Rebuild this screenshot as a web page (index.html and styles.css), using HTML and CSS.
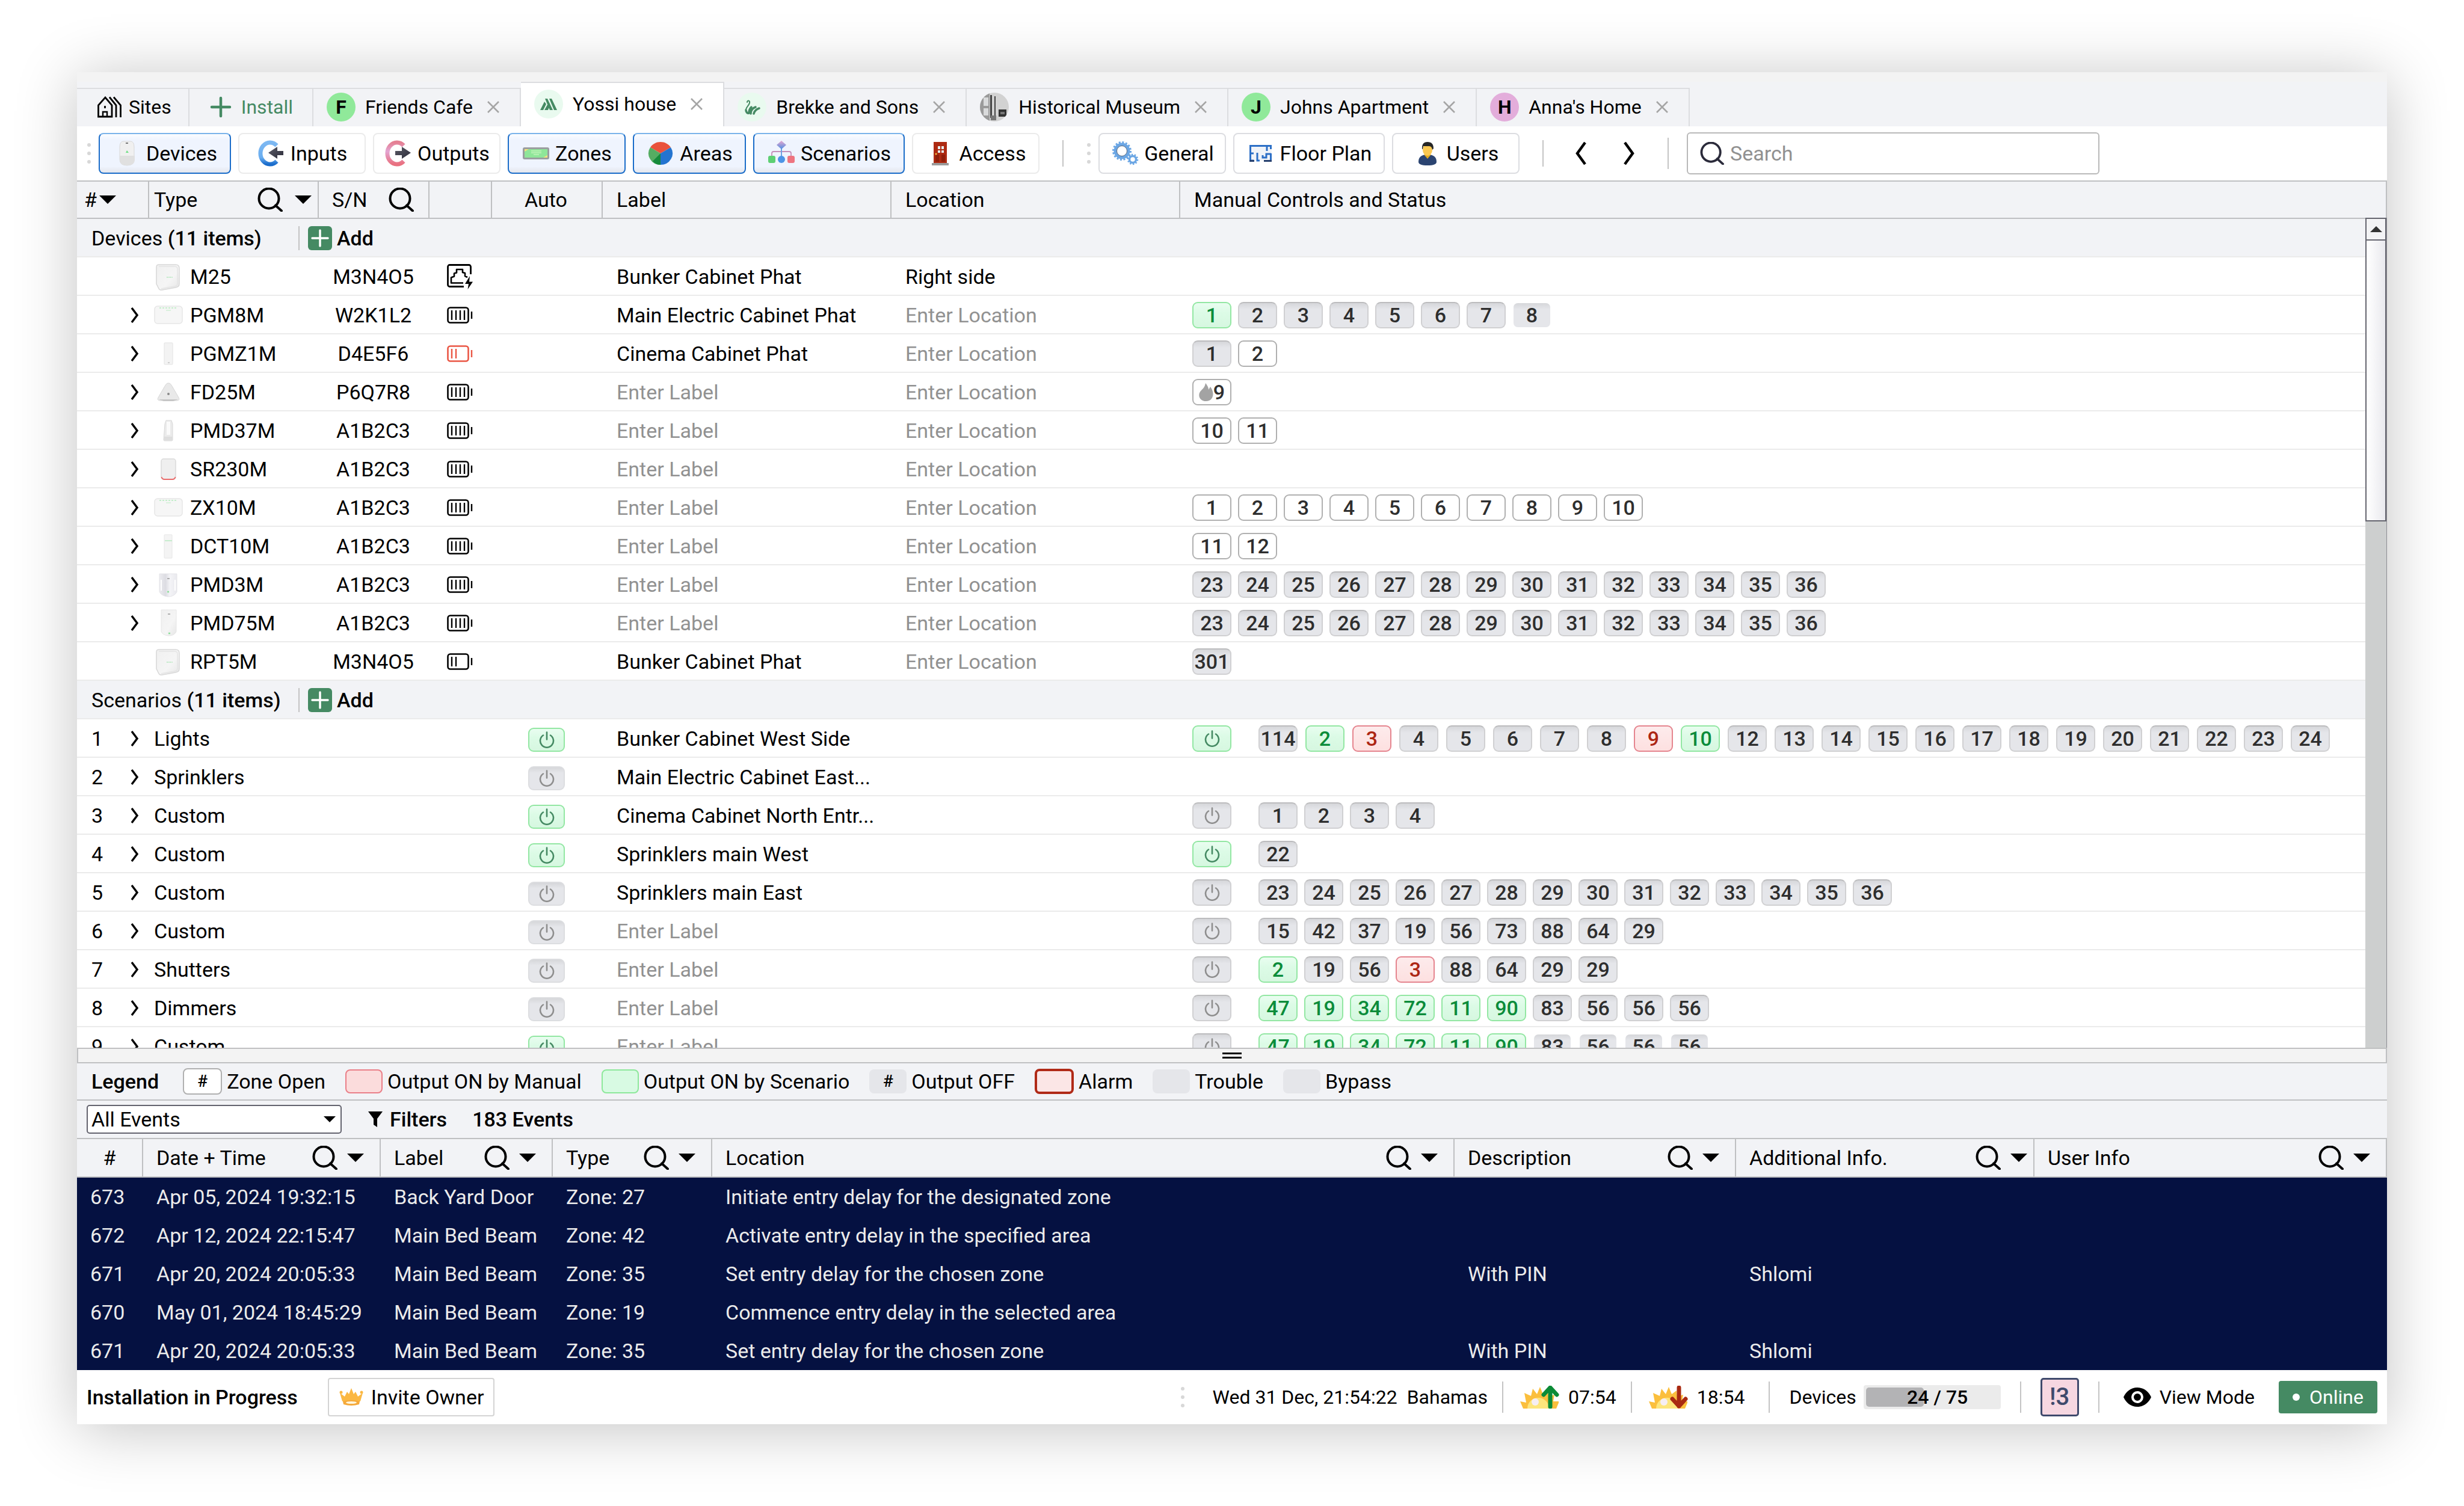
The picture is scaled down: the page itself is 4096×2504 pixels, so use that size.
FILE: index.html
```html
<!DOCTYPE html>
<html lang="en">
<head>
<meta charset="utf-8">
<title>Yossi house</title>
<meta name="viewport" content="width=device-width, initial-scale=1">
<link rel="stylesheet" href="styles.css">
</head>
<body>
<svg class="sprite" aria-hidden="true">
  <defs>
    <linearGradient id="g-dark" x1="0" y1="0" x2="1" y2="1"><stop offset="0" stop-color="#5a5b66"/><stop offset="1" stop-color="#2c2c3a"/></linearGradient>
    <linearGradient id="g-blue" x1="0" y1="0" x2="0" y2="1"><stop offset="0" stop-color="#7db8f2"/><stop offset=".7" stop-color="#6aaef0"/><stop offset="1" stop-color="#1a6ccb"/></linearGradient>
    <linearGradient id="g-pink" x1="0" y1="0" x2="0" y2="1"><stop offset="0" stop-color="#e57f92"/><stop offset=".4" stop-color="#e3a5d3"/><stop offset="1" stop-color="#e9707f"/></linearGradient>
    <linearGradient id="g-shell" x1="0" y1="0" x2="1" y2="1"><stop offset="0" stop-color="#f0f0f0"/><stop offset=".6" stop-color="#f5f5f5"/><stop offset="1" stop-color="#e6e6e6"/></linearGradient>
    <linearGradient id="g-tube" x1="0" y1="0" x2="1" y2="0"><stop offset="0" stop-color="#ececf0"/><stop offset=".35" stop-color="#dcdce2"/><stop offset=".6" stop-color="#f4f4f7"/><stop offset="1" stop-color="#e9e9ee"/></linearGradient>
    <linearGradient id="g-tree" x1="0" y1="0" x2="0" y2="1"><stop offset="0" stop-color="#e7a6cf"/><stop offset="1" stop-color="#4d8fe3"/></linearGradient>
    <clipPath id="round"><circle cx="24" cy="24" r="24"/></clipPath>
  </defs>
  <symbol id="i-search" viewBox="0 0 42 40"><circle cx="19" cy="18" r="16.500" fill="none" stroke="currentColor" stroke-width="4"/><path d="M30 29.500 40 38.500" stroke="currentColor" stroke-width="4" stroke-linecap="round"/></symbol>
  <symbol id="i-down" viewBox="0 0 28 14"><path d="M0 0h28L14 14z" fill="currentColor"/></symbol>
  <symbol id="i-next" viewBox="0 0 14 28"><path d="M2 2 11 14 2 26" fill="none" stroke="currentColor" stroke-width="3.500"/></symbol>
  <symbol id="i-close" viewBox="0 0 20 20"><path d="M1 1 19 19M19 1 1 19" stroke="currentColor" stroke-width="2.500"/></symbol>
  <symbol id="i-add" viewBox="0 0 40 40"><rect width="40" height="40" rx="6" fill="#458a63"/><path d="M20 7v26M7 20h26" stroke="#fff" stroke-width="3.500" stroke-linecap="round"/></symbol>
  <symbol id="i-power" viewBox="0 0 28 28"><path d="M8 6.500a11 11 0 1 0 12 0M14 1.500v12" fill="none" stroke="currentColor" stroke-width="2.600" stroke-linecap="round"/></symbol>
  <symbol id="i-battery" viewBox="0 0 43 28"><rect x="1.500" y="1.500" width="34" height="25" rx="4" fill="none" stroke="currentColor" stroke-width="2.600"/><path d="M8 6v16M15 6v16M22 6v16M29 6v16M41 8v12" stroke="currentColor" stroke-width="2.400"/></symbol>
  <symbol id="i-battery-low" viewBox="0 0 43 28"><rect x="1.500" y="1.500" width="34" height="25" rx="4" fill="none" stroke="currentColor" stroke-width="2.600"/><path d="M8 6v16M15 6v16M41 8v12" stroke="currentColor" stroke-width="2.400"/></symbol>
  <symbol id="i-ethernet" viewBox="0 0 43 42"><path d="M28 37.500H4.500a3 3 0 0 1-3-3v-30a3 3 0 0 1 3-3h32a3 3 0 0 1 3 3V17" fill="none" stroke="#000" stroke-width="2.800"/><path d="M27 31.500H7v-9l5-2v-5l4-1V9h10v5l4 1v5l4 2" fill="none" stroke="#000" stroke-width="2.600" stroke-linejoin="round"/><path d="M38 20 30 33h6l-1.500 9L43 29.500h-6z"/></symbol>
  <symbol id="i-flame" viewBox="0 0 24 30"><path d="M11 0c4 5 5 8 5 11l3-5c8 10 5 24-7 24S-3 18 4 12c3-3 6-6 7-12z" fill="#a3a3a3"/></symbol>
  <symbol id="d-hub" viewBox="0 0 48 48"><path d="M8 4h28c4 0 6 2 6 6v26c0 4-2 5-6 6l-22 4c-4 1-6-1-7-4L4 36V8c0-3 1-4 4-4z" fill="url(#g-shell)" stroke="#d8d8d8" stroke-width="1.500"/><path d="M8 7h26c3 0 5 1 5 4v24c0 3-1 4-4 5l-23 4" fill="none" stroke="#e4e4e4" stroke-width="1.500"/><path d="M21 25h10" stroke="#a9e5b4" stroke-width="1.500" stroke-dasharray="2 1"/></symbol>
  <symbol id="d-wide" viewBox="0 0 48 48"><rect x="1" y="9" width="46" height="29" rx="5" fill="#f6f6f6" stroke="#e6e6e6" stroke-width="1.500"/><path d="M9 12h30" stroke="#b4ecbd" stroke-width="1.500" stroke-dasharray="3 2"/><path d="M20 16h8" stroke="#c6efcd" stroke-width="1.200"/></symbol>
  <symbol id="d-slim" viewBox="0 0 48 48"><rect x="17" y="6" width="14" height="36" rx="1" fill="#f3f3f3" stroke="#e2e2e2"/><path d="M23 39h3" stroke="#aaa"/></symbol>
  <symbol id="d-fire" viewBox="0 0 48 48"><path d="M24 9c3 0 4 2 6 5l11 19c2 4 0 5-4 5H11c-4 0-6-1-4-5l11-19c2-3 3-5 6-5z" fill="#e9e9e9" stroke="#d6d6d6"/><path d="M8 36h32l-8 3H16z" fill="#c6c6c6"/><circle cx="24" cy="27" r="2" fill="#888"/></symbol>
  <symbol id="d-motion" viewBox="0 0 48 48"><path d="M20 7h9l2 6v26c0 2-1 2-3 2h-9c-2 0-3 0-3-2l2-26z" fill="#eaeaea" stroke="#d9d9d9"/><path d="M21 9h6v22h-6z" fill="#fafafa"/><path d="M17 34h14v6H17z" fill="#dedede"/></symbol>
  <symbol id="d-siren" viewBox="0 0 48 48"><rect x="12" y="7" width="24" height="34" rx="4" fill="#efefef" stroke="#dadada" stroke-width="1.500"/><path d="M12.500 37q1 4 5 4h13q4 0 5-4" fill="none" stroke="#ea6a6a" stroke-width="1.800"/></symbol>
  <symbol id="d-slim-g" viewBox="0 0 48 48"><rect x="17" y="5" width="13" height="39" rx="1" fill="#f4f4f4" stroke="#e6e6e6"/><path d="M18 15h12" stroke="#b8ecc2" stroke-width="1.500"/></symbol>
  <symbol id="d-curve" viewBox="0 0 48 48"><path d="M9 6h29v30c-3 6-9 8-14 8s-12-2-15-8z" fill="url(#g-tube)" stroke="#e4e4e8"/><path d="M12 16v18M35 16v18" stroke="#fff" stroke-width="2"/><path d="M22 14h4" stroke="#999" stroke-width="1.500"/><path d="M22 36h3" stroke="#8fe09c" stroke-width="2.500"/></symbol>
  <symbol id="d-tall" viewBox="0 0 48 48"><path d="M12 2h25v36c-2 5-7 7-12 7s-11-2-13-7z" fill="url(#g-shell)" stroke="#e6e6e6"/><path d="M23 9h4" stroke="#999" stroke-width="1.500"/><path d="M24 41h3" stroke="#8fe09c" stroke-width="2.500"/></symbol>
  <symbol id="i-sun" viewBox="0 0 64 38"><path d="M0 26 10 28 7 12 18 17 21 5 28 14 33 2 38 14 46 8 47 18 57 15 55 26 65 26 60 38H5z" fill="#fbbf3d"/><path d="M12 38a18 18 0 0 1 36 0z" fill="#fde57c"/><circle cx="25" cy="27" r="6" fill="#f6eef3"/></symbol>
</svg>

<main class="window">
  <div class="titlebar"></div>
  <nav class="tabs" aria-label="Open sites">
    <div class="tab wide"><svg class="ic40" viewBox="0 0 40 36" fill="none" stroke="#000" stroke-width="2.800"><path d="M1.500 34V15L13 2l11 13v19z"/><path d="M9 34v-8h7v8" stroke-width="2.400"/><path d="M12.500 16v4"/><path d="M20 1.500 31 15v20M27 1.500 38.500 15v20"/></svg><a href="#sites">Sites</a></div>
    <div class="tab wide install"><svg class="ic40" viewBox="0 0 40 36" stroke="#458a63" stroke-width="4.500" stroke-linecap="round"><path d="M20 3v30M5 18h30"/></svg><a href="#install">Install</a></div>
    <div class="tab"><span class="avatar green">F</span><a href="#friends">Friends Cafe</a><button class="close" aria-label="Close Friends Cafe"><svg><use href="#i-close"/></svg></button></div>
    <div class="tab active"><span class="avatar pale"><svg viewBox="0 0 48 48" fill="#458a63"><path d="M10 34 17 20l3 4-5 10zM17 34l5-9 3 4-2 5zM18 15h4l9 19h-5zM25 15h4l9 19h-5z"/></svg></span><a href="#yossi" aria-current="page">Yossi house</a><button class="close" aria-label="Close Yossi house"><svg><use href="#i-close"/></svg></button></div>
    <div class="tab"><span class="avatar pale"><svg viewBox="0 0 48 48" fill="none" stroke="#458a63" stroke-linecap="round"><path d="M16 16c0-4 5-3 4 1-1 5-7 8-6 13" stroke-width="2"/><path d="M14 29c0 4 3 6 5 5 0-4 1-7 4-10M22 35c0-5 2-9 8-11M27 35c1-4 3-7 9-9" stroke-width="3.500"/></svg></span><a href="#brekke">Brekke and Sons</a><button class="close" aria-label="Close Brekke and Sons"><svg><use href="#i-close"/></svg></button></div>
    <div class="tab"><span class="avatar"><svg viewBox="0 0 48 48"><g clip-path="url(#round)"><path d="M0 0h48v48H0z" fill="#d2d2d2"/><path d="M0 0h16v48H0z" fill="#9a9a9a"/><path d="M6 8h8v14H6zM6 26h8v12H6z" fill="#d9dadb"/><path d="M17 4h3v38h-3zM24 6h2v36h-2z" fill="#444"/><path d="M18 38h9v8h-9z" fill="#777"/><path d="M31 28h13v12H31z" fill="#333"/><path d="M34 32h7v4h-7z" fill="#777"/></g></svg></span><a href="#museum">Historical Museum</a><button class="close" aria-label="Close Historical Museum"><svg><use href="#i-close"/></svg></button></div>
    <div class="tab"><span class="avatar green">J</span><a href="#johns">Johns Apartment</a><button class="close" aria-label="Close Johns Apartment"><svg><use href="#i-close"/></svg></button></div>
    <div class="tab"><span class="avatar pink">H</span><a href="#anna">Anna's Home</a><button class="close" aria-label="Close Anna's Home"><svg><use href="#i-close"/></svg></button></div>
  </nav>

  <div class="toolbar">
    <span class="grip"><i></i><i></i><i></i></span>
    <button class="tool on w220"><svg viewBox="0 0 48 44"><path d="M12 12q0-10 6-10h12q6 0 6 10v20q0 10-12 10T12 32z" fill="#f0f0f0" stroke="#d8d8d8"/><path d="M12 26h25v6q0 10-12 10T12 32z" fill="#e0e0e0"/><path d="M22 5h4" stroke="#777" stroke-width="2"/><path d="M22 21l2-4 3 4z" fill="#71e086"/></svg>Devices</button>
    <button class="tool w212"><svg viewBox="0 0 48 44"><path d="M33 9A16 18 0 1 0 33 35" fill="none" stroke="url(#g-blue)" stroke-width="7"/><path d="M19 21 34 11v7h10v7H34v6z" fill="url(#g-dark)"/></svg>Inputs</button>
    <button class="tool w212"><svg viewBox="0 0 48 44"><path d="M33 9A16 18 0 1 0 33 35" fill="none" stroke="url(#g-pink)" stroke-width="7"/><path d="M45 21 30 11v7H19v7h11v6z" fill="url(#g-dark)"/></svg>Outputs</button>
    <button class="tool on w196"><svg viewBox="0 0 48 44"><rect x="2" y="12" width="44" height="20" rx="3" fill="#9a9ea0"/><rect x="5" y="15" width="38" height="14" fill="#8fe699"/><path d="M5 15h7l-7 4zM43 29h-7l7-4z" fill="#f7e27b"/><path d="M16 18h17M16 21h17M20 24h9" stroke="#c3f3bb" stroke-width="1.500"/></svg>Zones</button>
    <button class="tool on w188"><svg viewBox="0 0 48 44"><path d="M24 22 7 12A20 19 0 0 1 41 12z" fill="#e9523c"/><path d="M24 22 41 12A20 19 0 0 1 24 41z" fill="#2374d0"/><path d="M24 22v19A20 19 0 0 1 7 12z" fill="#55ad62"/><path d="M24 22v19q-8 0-13-6z" fill="#168a3c"/></svg>Areas</button>
    <button class="tool on w252"><svg viewBox="0 0 48 44"><path d="M8 28v-6q0-3 3-3h26q3 0 3 3v6M24 12v16" fill="none" stroke="#c58fb9" stroke-width="1.800"/><path d="M24 11v16" stroke="#6da2e4" stroke-width="2"/><path d="M24 1 32 8 24 15 16 8z" fill="url(#g-tree)"/><rect x="2" y="26" width="12" height="12" rx="3" fill="#5dcf73"/><circle cx="24" cy="32" r="6" fill="#4d94e6"/><rect x="34" y="26" width="12" height="12" rx="3" fill="#ee7480"/></svg>Scenarios</button>
    <button class="tool w212"><svg viewBox="0 0 48 44"><path d="M13 3h22v36H13z" fill="#ad2a12"/><path d="M20 10h4v5h-4zM26 10h4v5h-4zM20 17h4v4h-4zM26 17h4v4h-4z" fill="#e5eef0"/><path d="M16 24h6v12h-6zM26 24h6v12h-6z" fill="#8f1f0b"/><path d="M10 38h28v4H10z" fill="#9b9b9b"/><circle cx="17" cy="23" r="1.500" fill="#f7c33e"/></svg>Access</button>
    <span class="rule"></span>
    <span class="grip"><i></i><i></i><i></i></span>
    <button class="tool w212 soft"><svg viewBox="0 0 48 44" fill="none" stroke="#6ba6e4"><circle cx="19" cy="18" r="11" stroke-width="5"/><circle cx="19" cy="18" r="14.500" stroke-width="3" stroke-dasharray="3 2.690"/><circle cx="37" cy="32" r="5.500" stroke-width="3.500"/><circle cx="37" cy="32" r="8" stroke-width="2.500" stroke-dasharray="2.500 2.530"/><circle cx="19" cy="18" r="8.500" stroke="#54667d" stroke-width="1"/></svg>General</button>
    <button class="tool w252 soft"><svg viewBox="0 0 48 44"><path d="M5 8h37v26H5z" fill="#f0f3f8"/><path d="M12 34H6.500V9.500h34V15M40.500 22v12M34 10v8M41 23h-8v6h-6v-4M7 22h5M18 21v13h4" fill="none" stroke="#2c6fc6" stroke-width="3"/><path d="M5 34.500h8M29 34.500h13" stroke="#26406e" stroke-width="3"/></svg>Floor Plan</button>
    <button class="tool w212 soft"><svg viewBox="0 0 48 44"><path d="M9 36q0-12 15-12t15 12q0 6-15 6T9 36z" fill="#2b4471"/><path d="M18 24 24 31 30 24z" fill="#e2a91f"/><ellipse cx="24" cy="16" rx="8" ry="10" fill="#fbc851"/><path d="M15 15q-1-12 9-12t10 11l-2 2q-1-6-5-6t-10 0l-1 5z" fill="#262626"/></svg>Users</button>
    <span class="rule"></span>
    <button class="nav prev" aria-label="Previous"><svg viewBox="0 0 20 40"><path d="M17 2 4 20 17 38" fill="none" stroke="#000" stroke-width="4.500"/></svg></button>
    <button class="nav" aria-label="Next"><svg viewBox="0 0 20 40"><path d="M3 2 16 20 3 38" fill="none" stroke="#000" stroke-width="4.500"/></svg></button>
    <span class="rule tall"></span>
    <label class="search"><svg class="mag"><use href="#i-search"/></svg><input type="search" placeholder="Search" aria-label="Search"></label>
  </div>

  <section class="grid-area">
    <table class="grid">
      <colgroup><col class="c1"><col class="c2"><col class="c3"><col class="c4"><col class="c5"><col class="c6"><col class="c7"><col></colgroup>
      <thead><tr>
        <th><div class="head tight"><span>#</span><svg class="down"><use href="#i-down"/></svg></div></th>
        <th><div class="head near"><span>Type</span><svg class="mag push"><use href="#i-search"/></svg><svg class="down"><use href="#i-down"/></svg></div></th>
        <th><div class="head sn"><span>S/N</span><svg class="mag push"><use href="#i-search"/></svg></div></th>
        <th></th><th class="mid">Auto</th><th class="txt">Label</th><th class="txt">Location</th><th class="txt">Manual Controls and Status</th>
      </tr></thead>
      <tbody>
        <tr class="section"><th colspan="8"><div class="sec"><span class="sec-name">Devices <b>(11 items)</b></span><button class="add"><svg><use href="#i-add"/></svg>Add</button></div></th></tr>
        <tr><td></td><td><div class="type"><svg><use href="#d-hub"/></svg>M25</div></td><td class="mid">M3N4O5</td><td class="mid"><svg class="eth"><use href="#i-ethernet"/></svg></td><td></td><td><input aria-label="Label" value="Bunker Cabinet Phat"></td><td><input aria-label="Location" value="Right side"></td><td></td></tr>
        <tr><td><button class="exp" aria-label="Expand"><svg><use href="#i-next"/></svg></button></td><td><div class="type"><svg><use href="#d-wide"/></svg>PGM8M</div></td><td class="mid">W2K1L2</td><td class="mid"><svg class="bat"><use href="#i-battery"/></svg></td><td></td><td><input aria-label="Label" value="Main Electric Cabinet Phat"></td><td><input aria-label="Location" placeholder="Enter Location"></td><td><div class="chips"><button class="on">1</button><button>2</button><button>3</button><button>4</button><button>5</button><button>6</button><button>7</button><button class="flat">8</button></div></td></tr>
        <tr><td><button class="exp" aria-label="Expand"><svg><use href="#i-next"/></svg></button></td><td><div class="type"><svg><use href="#d-slim"/></svg>PGMZ1M</div></td><td class="mid">D4E5F6</td><td class="mid"><svg class="bat low"><use href="#i-battery-low"/></svg></td><td></td><td><input aria-label="Label" value="Cinema Cabinet Phat"></td><td><input aria-label="Location" placeholder="Enter Location"></td><td><div class="chips"><button>1</button><button class="open">2</button></div></td></tr>
        <tr><td><button class="exp" aria-label="Expand"><svg><use href="#i-next"/></svg></button></td><td><div class="type"><svg><use href="#d-fire"/></svg>FD25M</div></td><td class="mid">P6Q7R8</td><td class="mid"><svg class="bat"><use href="#i-battery"/></svg></td><td></td><td><input aria-label="Label" placeholder="Enter Label"></td><td><input aria-label="Location" placeholder="Enter Location"></td><td><div class="chips"><button class="open"><svg class="flame"><use href="#i-flame"/></svg>9</button></div></td></tr>
        <tr><td><button class="exp" aria-label="Expand"><svg><use href="#i-next"/></svg></button></td><td><div class="type"><svg><use href="#d-motion"/></svg>PMD37M</div></td><td class="mid">A1B2C3</td><td class="mid"><svg class="bat"><use href="#i-battery"/></svg></td><td></td><td><input aria-label="Label" placeholder="Enter Label"></td><td><input aria-label="Location" placeholder="Enter Location"></td><td><div class="chips"><button class="open">10</button><button class="open">11</button></div></td></tr>
        <tr><td><button class="exp" aria-label="Expand"><svg><use href="#i-next"/></svg></button></td><td><div class="type"><svg><use href="#d-siren"/></svg>SR230M</div></td><td class="mid">A1B2C3</td><td class="mid"><svg class="bat"><use href="#i-battery"/></svg></td><td></td><td><input aria-label="Label" placeholder="Enter Label"></td><td><input aria-label="Location" placeholder="Enter Location"></td><td></td></tr>
        <tr><td><button class="exp" aria-label="Expand"><svg><use href="#i-next"/></svg></button></td><td><div class="type"><svg><use href="#d-wide"/></svg>ZX10M</div></td><td class="mid">A1B2C3</td><td class="mid"><svg class="bat"><use href="#i-battery"/></svg></td><td></td><td><input aria-label="Label" placeholder="Enter Label"></td><td><input aria-label="Location" placeholder="Enter Location"></td><td><div class="chips"><button class="open">1</button><button class="open">2</button><button class="open">3</button><button class="open">4</button><button class="open">5</button><button class="open">6</button><button class="open">7</button><button class="open">8</button><button class="open">9</button><button class="open">10</button></div></td></tr>
        <tr><td><button class="exp" aria-label="Expand"><svg><use href="#i-next"/></svg></button></td><td><div class="type"><svg><use href="#d-slim-g"/></svg>DCT10M</div></td><td class="mid">A1B2C3</td><td class="mid"><svg class="bat"><use href="#i-battery"/></svg></td><td></td><td><input aria-label="Label" placeholder="Enter Label"></td><td><input aria-label="Location" placeholder="Enter Location"></td><td><div class="chips"><button class="open">11</button><button class="open">12</button></div></td></tr>
        <tr><td><button class="exp" aria-label="Expand"><svg><use href="#i-next"/></svg></button></td><td><div class="type"><svg><use href="#d-curve"/></svg>PMD3M</div></td><td class="mid">A1B2C3</td><td class="mid"><svg class="bat"><use href="#i-battery"/></svg></td><td></td><td><input aria-label="Label" placeholder="Enter Label"></td><td><input aria-label="Location" placeholder="Enter Location"></td><td><div class="chips"><button>23</button><button>24</button><button>25</button><button>26</button><button>27</button><button>28</button><button>29</button><button>30</button><button>31</button><button>32</button><button>33</button><button>34</button><button>35</button><button>36</button></div></td></tr>
        <tr><td><button class="exp" aria-label="Expand"><svg><use href="#i-next"/></svg></button></td><td><div class="type"><svg><use href="#d-tall"/></svg>PMD75M</div></td><td class="mid">A1B2C3</td><td class="mid"><svg class="bat"><use href="#i-battery"/></svg></td><td></td><td><input aria-label="Label" placeholder="Enter Label"></td><td><input aria-label="Location" placeholder="Enter Location"></td><td><div class="chips"><button>23</button><button>24</button><button>25</button><button>26</button><button>27</button><button>28</button><button>29</button><button>30</button><button>31</button><button>32</button><button>33</button><button>34</button><button>35</button><button>36</button></div></td></tr>
        <tr><td></td><td><div class="type"><svg><use href="#d-hub"/></svg>RPT5M</div></td><td class="mid">M3N4O5</td><td class="mid"><svg class="bat"><use href="#i-battery-low"/></svg></td><td></td><td><input aria-label="Label" value="Bunker Cabinet Phat"></td><td><input aria-label="Location" placeholder="Enter Location"></td><td><div class="chips"><button>301</button></div></td></tr>
      </tbody>
      <tbody>
        <tr class="section"><th colspan="8"><div class="sec"><span class="sec-name">Scenarios <b>(11 items)</b></span><button class="add"><svg><use href="#i-add"/></svg>Add</button></div></th></tr>
        <tr><td><div class="num">1<button class="exp" aria-label="Expand"><svg><use href="#i-next"/></svg></button></div></td><td class="name" colspan="3">Lights</td><td class="mid"><button class="pw on" aria-label="Auto"><svg><use href="#i-power"/></svg></button></td><td><input aria-label="Label" value="Bunker Cabinet West Side"></td><td></td><td><div class="chips loose"><button class="run on" aria-label="Run"><svg><use href="#i-power"/></svg></button><button>114</button><button class="on">2</button><button class="man">3</button><button>4</button><button>5</button><button>6</button><button>7</button><button>8</button><button class="man">9</button><button class="on">10</button><button>12</button><button>13</button><button>14</button><button>15</button><button>16</button><button>17</button><button>18</button><button>19</button><button>20</button><button>21</button><button>22</button><button>23</button><button>24</button></div></td></tr>
        <tr><td><div class="num">2<button class="exp" aria-label="Expand"><svg><use href="#i-next"/></svg></button></div></td><td class="name" colspan="3">Sprinklers</td><td class="mid"><button class="pw" aria-label="Auto"><svg><use href="#i-power"/></svg></button></td><td><input aria-label="Label" value="Main Electric Cabinet East..."></td><td></td><td></td></tr>
        <tr><td><div class="num">3<button class="exp" aria-label="Expand"><svg><use href="#i-next"/></svg></button></div></td><td class="name" colspan="3">Custom</td><td class="mid"><button class="pw on" aria-label="Auto"><svg><use href="#i-power"/></svg></button></td><td><input aria-label="Label" value="Cinema Cabinet North Entr..."></td><td></td><td><div class="chips"><button class="run" aria-label="Run"><svg><use href="#i-power"/></svg></button><button>1</button><button>2</button><button>3</button><button>4</button></div></td></tr>
        <tr><td><div class="num">4<button class="exp" aria-label="Expand"><svg><use href="#i-next"/></svg></button></div></td><td class="name" colspan="3">Custom</td><td class="mid"><button class="pw on" aria-label="Auto"><svg><use href="#i-power"/></svg></button></td><td><input aria-label="Label" value="Sprinklers main West"></td><td></td><td><div class="chips"><button class="run on" aria-label="Run"><svg><use href="#i-power"/></svg></button><button>22</button></div></td></tr>
        <tr><td><div class="num">5<button class="exp" aria-label="Expand"><svg><use href="#i-next"/></svg></button></div></td><td class="name" colspan="3">Custom</td><td class="mid"><button class="pw" aria-label="Auto"><svg><use href="#i-power"/></svg></button></td><td><input aria-label="Label" value="Sprinklers main East"></td><td></td><td><div class="chips"><button class="run" aria-label="Run"><svg><use href="#i-power"/></svg></button><button>23</button><button>24</button><button>25</button><button>26</button><button>27</button><button>28</button><button>29</button><button>30</button><button>31</button><button>32</button><button>33</button><button>34</button><button>35</button><button>36</button></div></td></tr>
        <tr><td><div class="num">6<button class="exp" aria-label="Expand"><svg><use href="#i-next"/></svg></button></div></td><td class="name" colspan="3">Custom</td><td class="mid"><button class="pw" aria-label="Auto"><svg><use href="#i-power"/></svg></button></td><td><input aria-label="Label" placeholder="Enter Label"></td><td></td><td><div class="chips"><button class="run" aria-label="Run"><svg><use href="#i-power"/></svg></button><button>15</button><button>42</button><button>37</button><button>19</button><button>56</button><button>73</button><button>88</button><button>64</button><button>29</button></div></td></tr>
        <tr><td><div class="num">7<button class="exp" aria-label="Expand"><svg><use href="#i-next"/></svg></button></div></td><td class="name" colspan="3">Shutters</td><td class="mid"><button class="pw" aria-label="Auto"><svg><use href="#i-power"/></svg></button></td><td><input aria-label="Label" placeholder="Enter Label"></td><td></td><td><div class="chips"><button class="run" aria-label="Run"><svg><use href="#i-power"/></svg></button><button class="on">2</button><button>19</button><button>56</button><button class="man">3</button><button>88</button><button>64</button><button>29</button><button>29</button></div></td></tr>
        <tr><td><div class="num">8<button class="exp" aria-label="Expand"><svg><use href="#i-next"/></svg></button></div></td><td class="name" colspan="3">Dimmers</td><td class="mid"><button class="pw" aria-label="Auto"><svg><use href="#i-power"/></svg></button></td><td><input aria-label="Label" placeholder="Enter Label"></td><td></td><td><div class="chips"><button class="run" aria-label="Run"><svg><use href="#i-power"/></svg></button><button class="on">47</button><button class="on">19</button><button class="on">34</button><button class="on">72</button><button class="on">11</button><button class="on">90</button><button>83</button><button>56</button><button>56</button><button>56</button></div></td></tr>
        <tr><td><div class="num">9<button class="exp" aria-label="Expand"><svg><use href="#i-next"/></svg></button></div></td><td class="name" colspan="3">Custom</td><td class="mid"><button class="pw on" aria-label="Auto"><svg><use href="#i-power"/></svg></button></td><td><input aria-label="Label" placeholder="Enter Label"></td><td></td><td><div class="chips"><button class="run" aria-label="Run"><svg><use href="#i-power"/></svg></button><button class="on">47</button><button class="on">19</button><button class="on">34</button><button class="on">72</button><button class="on">11</button><button class="on">90</button><button class="flat">83</button><button class="flat">56</button><button class="flat">56</button><button class="flat">56</button></div></td></tr>
      </tbody>
    </table>
    <div class="scrollbar"><button aria-label="Scroll up"><svg viewBox="0 0 20 10"><path d="M10 0 20 10H0z" fill="#333"/></svg></button><div class="thumb"></div></div>
  </section>

  <div class="splitter"><span></span></div>

  <div class="legend">
    <strong>Legend</strong>
    <span class="key"><i class="sw open">#</i>Zone Open</span>
    <span class="key"><i class="sw red"></i>Output ON by Manual</span>
    <span class="key"><i class="sw grn"></i>Output ON by Scenario</span>
    <span class="key"><i class="sw">#</i>Output OFF</span>
    <span class="key"><i class="sw alarm"></i>Alarm</span>
    <span class="key"><i class="sw"></i>Trouble</span>
    <span class="key"><i class="sw"></i>Bypass</span>
  </div>

  <div class="filters">
    <label class="pick"><select aria-label="Events shown"><option>All Events</option></select><svg viewBox="0 0 28 14"><path d="M0 0h28L14 14z"/></svg></label>
    <button class="filter"><svg viewBox="0 0 24 26"><path d="M0 0h24L15 12v14l-6-4V12z"/></svg>Filters</button>
    <strong>183 Events</strong>
  </div>

  <table class="events">
    <colgroup><col class="e1"><col class="e2"><col class="e3"><col class="e4"><col><col class="e6"><col class="e7"><col class="e8"></colgroup>
    <thead><tr>
      <th class="hash">#</th>
      <th><div class="head"><span>Date + Time</span><svg class="mag push"><use href="#i-search"/></svg><svg class="down"><use href="#i-down"/></svg></div></th>
      <th><div class="head"><span>Label</span><svg class="mag push"><use href="#i-search"/></svg><svg class="down"><use href="#i-down"/></svg></div></th>
      <th><div class="head"><span>Type</span><svg class="mag push"><use href="#i-search"/></svg><svg class="down"><use href="#i-down"/></svg></div></th>
      <th><div class="head"><span>Location</span><svg class="mag push"><use href="#i-search"/></svg><svg class="down"><use href="#i-down"/></svg></div></th>
      <th><div class="head"><span>Description</span><svg class="mag push"><use href="#i-search"/></svg><svg class="down"><use href="#i-down"/></svg></div></th>
      <th><div class="head short"><span>Additional Info.</span><svg class="mag push"><use href="#i-search"/></svg><svg class="down"><use href="#i-down"/></svg></div></th>
      <th><div class="head"><span>User Info</span><svg class="mag push"><use href="#i-search"/></svg><svg class="down"><use href="#i-down"/></svg></div></th>
    </tr></thead>
    <tbody>
      <tr><td>673</td><td>Apr 05, 2024 19:32:15</td><td>Back Yard Door</td><td>Zone: 27</td><td>Initiate entry delay for the designated zone</td><td></td><td></td><td></td></tr>
      <tr><td>672</td><td>Apr 12, 2024 22:15:47</td><td>Main Bed Beam</td><td>Zone: 42</td><td>Activate entry delay in the specified area</td><td></td><td></td><td></td></tr>
      <tr><td>671</td><td>Apr 20, 2024 20:05:33</td><td>Main Bed Beam</td><td>Zone: 35</td><td>Set entry delay for the chosen zone</td><td>With PIN</td><td>Shlomi</td><td></td></tr>
      <tr><td>670</td><td>May 01, 2024 18:45:29</td><td>Main Bed Beam</td><td>Zone: 19</td><td>Commence entry delay in the selected area</td><td></td><td></td><td></td></tr>
      <tr><td>671</td><td>Apr 20, 2024 20:05:33</td><td>Main Bed Beam</td><td>Zone: 35</td><td>Set entry delay for the chosen zone</td><td>With PIN</td><td>Shlomi</td><td></td></tr>
    </tbody>
  </table>

  <footer class="status">
    <strong class="stage">Installation in Progress</strong>
    <button class="invite"><svg viewBox="0 0 40 30"><path d="M5 22 1 8l8 6 4-8 3 4 4-10 4 10 3-4 4 8 8-6-4 14z" fill="#fbb843"/><circle cx="3" cy="7" r="2.500" fill="#fbb843"/><circle cx="37" cy="7" r="2.500" fill="#fbb843"/><path d="M6 22q14-4 28 0l-1 5q-13 4-26 0z" fill="#f5a93a"/><ellipse cx="20" cy="24" rx="9" ry="2" fill="#fff6dc"/></svg>Invite Owner</button>
    <span class="grip end"><i></i><i></i><i></i></span>
    <span class="clock"><span>Wed 31 Dec, 21:54:22</span><span>Bahamas</span></span>
    <span class="rule"></span>
    <span class="sun"><svg viewBox="0 0 66 38"><use href="#i-sun" width="64" height="38"/><path d="M50 35V4M39 15 50 3l11 12" fill="none" stroke="#0c8b37" stroke-width="7" stroke-linecap="round" stroke-linejoin="round"/></svg>07:54</span>
    <span class="rule"></span>
    <span class="sun"><svg viewBox="0 0 66 38"><use href="#i-sun" width="64" height="38"/><path d="M50 3v31M39 22l11 12 11-12" fill="none" stroke="#a92a12" stroke-width="7" stroke-linecap="round" stroke-linejoin="round"/></svg>18:54</span>
    <span class="rule late"></span>
    <span class="usage">Devices<span class="meter"><span class="fill"></span><b>24 / 75</b></span></span>
    <span class="rule"></span>
    <button class="alert">!3</button>
    <span class="rule"></span>
    <button class="view"><svg viewBox="0 0 46 32"><path d="M23 0C12 0 4 7 0 16c4 9 12 16 23 16s19-7 23-16C42 7 34 0 23 0zm0 26a10 10 0 1 1 0-20 10 10 0 0 1 0 20zm0-16a6 6 0 1 0 0 12 6 6 0 0 0 0-12z"/></svg>View Mode</button>
    <button class="online"><i></i>Online</button>
  </footer>
</main>
</body>
</html>
```
FILE: styles.css
```css
* { box-sizing: border-box; }

body {
  margin: 0;
  height: 100vh;
  padding: 120px 128px 136px;
  display: flex;
  background: #fff;
  font: 400 34px/40px Roboto, "Liberation Sans", sans-serif;
  color: #000;
}

.sprite { position: absolute; width: 0; height: 0; }

button, input, select { font: inherit; color: inherit; margin: 0; }
button { display: inline-flex; align-items: center; justify-content: center; padding: 0; border: 0; background: none; }
a { color: inherit; text-decoration: none; }
b, strong { font-weight: 500; }
svg { display: block; flex: none; }

.window {
  flex: 1;
  min-width: 0;
  display: flex;
  flex-direction: column;
  background: #fff;
  box-shadow: 0 8px 96px rgba(0, 0, 0, .24);
}

/* site tabs */
.titlebar { height: 16px; background: #f3f3f3; }
.tabs { display: flex; align-items: flex-end; height: 74px; background: #f2f3f6; font-size: 32px; }
.tab {
  display: flex;
  align-items: center;
  height: 64px;
  padding: 0 34px 2px 22px;
  border-top: 2px solid #dcdde0;
  border-right: 2px solid #dcdde0;
  gap: 16px;
  white-space: nowrap;
}
.tab.wide { padding: 0 28px 2px 34px; gap: 12px; }
.tab.install { padding: 0 32px 2px; gap: 14px; color: #458a63; }
.tab.active { height: 74px; background: #fff; }
.ic40 { width: 40px; height: 36px; }
.avatar {
  display: grid;
  place-items: center;
  width: 48px;
  height: 48px;
  border-radius: 50%;
  font-weight: 700;
}
.avatar svg { width: 48px; height: 48px; }
.avatar.green { background: #90e99a; }
.avatar.pink { background: #e3addb; }
.avatar.pale { background: #e9faef; }
.close { margin-left: 8px; color: #a5a5a5; }
.close svg { width: 20px; height: 20px; }

/* toolbar */
.toolbar { display: flex; align-items: center; gap: 12px; height: 90px; padding: 0 16px; }
.grip { display: flex; flex-direction: column; align-items: center; gap: 8px; width: 8px; }
.grip i { width: 6px; height: 6px; border-radius: 50%; background: #d8d8d8; }
.tool {
  gap: 8px;
  height: 68px;
  border: 2px solid #ebebeb;
  border-radius: 8px;
  background: #fff;
  white-space: nowrap;
}
.tool.soft { border-color: #dcdde1; }
.tool.on {
  border-color: #1b6dc9;
  border-top-color: #7ab3ea;
  background: linear-gradient(#fafcff, #eff4fe 16%, #eff4fe 84%, #e4e6ec);
}
.tool svg { width: 48px; height: 44px; }
.w188 { width: 188px; }
.w196 { width: 196px; }
.w212 { width: 212px; }
.w220 { width: 220px; }
.w252 { width: 252px; }
.rule { width: 2px; height: 44px; background: #c4c4c4; margin: 0 26px; }
.rule.tall { height: 52px; margin: 0 18px; }
.nav { width: 40px; height: 48px; margin-right: 14px; }
.nav.prev { margin-right: 28px; margin-left: 4px; }
.nav svg { width: 20px; height: 40px; }
.search {
  display: flex;
  align-items: center;
  width: 686px;
  height: 70px;
  padding: 0 20px;
  gap: 10px;
  border: 2px solid #b9b9b9;
  border-radius: 6px;
}
.search input { flex: 1; min-width: 0; border: 0; padding: 0; background: none; outline: 0; }
.search .mag { color: #2b2b3b; width: 40px; height: 38px; }
::placeholder { color: #919191; opacity: 1; }

/* devices and scenarios */
.grid-area { position: relative; flex: 1; min-height: 0; overflow: hidden; }
table { width: 100%; table-layout: fixed; border-collapse: separate; border-spacing: 0; }
th, td { height: 64px; padding: 0; font-weight: 400; text-align: left; white-space: nowrap; }
thead th {
  border: 0 solid #bfc0c2;
  border-width: 2px 2px 2px 0;
  background: #f2f3f6;
}
.grid td, .grid .section th { padding-top: 2px; border-bottom: 2px solid #ebebeb; }
.c1 { width: 120px; }
.c2 { width: 282px; }
.c3, .c5 { width: 184px; }
.c4 { width: 104px; }
.c6, .c7 { width: 480px; }
.txt { padding-left: 23px; }
.grid .mid { padding-right: 3px; text-align: center; }
.mid svg { margin: 0 auto; }
.head { display: flex; align-items: center; padding: 0 26px 0 22px; gap: 16px; }
.head.tight { padding: 0 0 0 12px; gap: 4px; }
.head.near { padding: 0 10px 0 8px; gap: 20px; }
.head.sn { padding: 0 24px 0 22px; }
.head.short { padding-right: 10px; }
.push { margin-left: auto; }
.mag { width: 42px; height: 40px; }
.down { width: 28px; height: 14px; }
.section th { background: #f2f3f6; }
.sec { display: flex; align-items: center; padding-left: 24px; }
.sec-name { width: 344px; }
.sec b, .add { font-weight: 500; }
.add { gap: 8px; padding-left: 14px; border-left: 2px solid #c4c4c4; }
.add svg { width: 40px; height: 40px; }
.type { display: flex; align-items: center; gap: 12px; padding-left: 8px; }
.type svg { width: 48px; height: 48px; }
.grid .name { padding-left: 8px; }
.num { display: flex; align-items: center; padding-left: 24px; }
.exp { display: flex; width: 14px; margin-left: 89px; }
.num .exp { margin-left: auto; margin-right: 17px; }
.exp svg { width: 14px; height: 28px; }
.bat { width: 43px; height: 28px; }
.bat.low { color: #ea5644; }
.eth { width: 43px; height: 42px; }
.grid input {
  display: block;
  width: 100%;
  padding: 0 0 0 23px;
  border: 0;
  background: none;
  outline: 0;
}

.chips { display: flex; gap: 11px; padding-left: 20px; }
.chips.loose { gap: 13px; }
.chips button, .pw {
  width: 65px;
  height: 44px;
  flex: none;
  border: 2px solid #d0d0d2;
  border-top-color: #bcbcbe;
  border-radius: 9px;
  background: linear-gradient(#d6d7da, #e5e6ea 25%);
  color: #2e2e2e;
  font-weight: 500;
}
.chips .open { border: 2px solid #b0b0b0; background: #fff; }
.chips .on, .pw.on {
  border-color: #93e7a3;
  background: linear-gradient(#e9fdf0, #dcfbe6 40%, #d6f7e0);
  color: #0b8c3a;
}
.chips .man { border-color: #e5858f; background: linear-gradient(#fdebec, #fde0e0); color: #ad2613; }
.chips .flat { border-color: transparent; background-clip: padding-box; }
.chips .run { margin-right: 34px; color: #8e8e8e; }
.chips.loose .run { margin-right: 32px; }
.chips .run svg, .pw svg { width: 28px; height: 28px; }
.chips .run.on, .pw.on { color: #458a63; }
.pw { width: 61px; height: 40px; border-color: #dcdde0; color: #8e8e8e; vertical-align: middle; }
.flame { width: 24px; height: 30px; }

.scrollbar {
  position: absolute;
  top: 62px;
  right: 0;
  bottom: 0;
  width: 36px;
  background: #cdcfcf;
  border-right: 1px solid #8d8d94;
}
.scrollbar button { display: flex; width: 100%; height: 38px; border: 2px solid #65656f; background: #f3f3f5; }
.scrollbar button svg { width: 20px; height: 10px; }
.thumb { height: 467px; border: 2px solid #65656f; border-top: 0; background: linear-gradient(90deg, #fff, #e9e9ee); }

.splitter {
  display: grid;
  place-items: center;
  height: 26px;
  border: 2px solid #bfc0c2;
  background: #f3f3f3;
}
.splitter span { width: 32px; height: 10px; border: 3px solid #000; border-width: 3px 0; }

/* legend and filters */
.legend, .filters { display: flex; align-items: center; background: #f2f3f6; }
.legend { height: 62px; gap: 33px; padding-left: 24px; border-bottom: 2px solid #bfc0c2; }
.legend strong { margin-right: 7px; }
.key { display: flex; align-items: center; gap: 8px; }
.sw {
  display: grid;
  place-items: center;
  width: 62px;
  height: 40px;
  border-radius: 8px;
  background: #e5e6ea;
  font-style: normal;
  font-weight: 500;
  font-size: 28px;
}
.sw.open { width: 65px; height: 44px; border: 2px solid #b0b0b0; background: #fff; }
.sw.red { border: 2px solid #ea7f88; background: #fbdcdc; }
.sw.grn { border: 2px solid #8de89b; background: #d8fae3; }
.sw.alarm { width: 65px; height: 42px; border: 4px solid #b02a17; background: #fbe6e6; }
.filters { height: 62px; padding-left: 16px; }
.pick { position: relative; width: 424px; }
.pick select {
  display: block;
  width: 100%;
  height: 48px;
  padding: 0 6px;
  border: 2px solid #63636e;
  border-radius: 5px;
  background: #fff;
  appearance: none;
}
.pick svg { position: absolute; right: 10px; top: 19px; width: 20px; height: 10px; }
.filter { gap: 12px; margin: 0 42px 0 44px; font-weight: 500; }
.filter svg { width: 24px; height: 26px; }

/* event log */
.events tbody { background: #051141; color: #ebebeb; }
.events thead th { height: 66px; }
.events td { padding-left: 22px; }
.events .hash { text-align: center; }
.e1 { width: 110px; }
.e2 { width: 395px; }
.e3 { width: 286px; }
.e4 { width: 265px; }
.e6 { width: 468px; }
.e7 { width: 496px; }
.e8 { width: 586px; }

/* status bar */
.status { display: flex; align-items: center; height: 90px; padding: 0 16px; font-size: 32px; white-space: nowrap; }
.stage, .invite { font-size: 34px; }
.invite {
  gap: 12px;
  height: 64px;
  margin-left: 50px;
  padding: 0 16px;
  border: 2px solid #d4d4d4;
  border-radius: 4px;
}
.invite svg { width: 42px; height: 30px; }
.grip.end { margin-left: auto; margin-right: 46px; }
.status .rule { height: 52px; margin: 0 28px 0 24px; }
.clock { display: flex; gap: 16px; }
.sun { display: flex; align-items: center; gap: 14px; }
.sun svg { width: 66px; height: 38px; }
.status .rule.late { margin-left: 40px; margin-right: 32px; }
.usage { display: flex; align-items: center; gap: 12px; }
.meter {
  position: relative;
  display: grid;
  place-items: center;
  width: 228px;
  height: 40px;
  padding: 0 4px;
  border-radius: 4px;
  background: #ebebeb;
}
.meter .fill { position: absolute; left: 4px; top: 4px; bottom: 4px; width: 96px; border-radius: 5px; background: #b3b3b5; }
.meter b { position: relative; padding-left: 18px; }
.status .usage + .rule { margin: 0 32px; }
.alert {
  width: 64px;
  height: 64px;
  border: 3px solid #3f4a6c;
  border-radius: 5px;
  background: #f6d7e1;
  color: #3f4a6c;
  font-size: 40px;
  font-weight: 500;
}
.status .alert + .rule { margin: 0 40px 0 32px; }
.view { gap: 14px; margin-right: 40px; }
.view svg { width: 46px; height: 32px; }
.online {
  gap: 16px;
  width: 164px;
  height: 54px;
  border-radius: 4px;
  background: #458a63;
  color: #fff;
}
.online i { width: 12px; height: 12px; border-radius: 50%; background: #fff; }
```
